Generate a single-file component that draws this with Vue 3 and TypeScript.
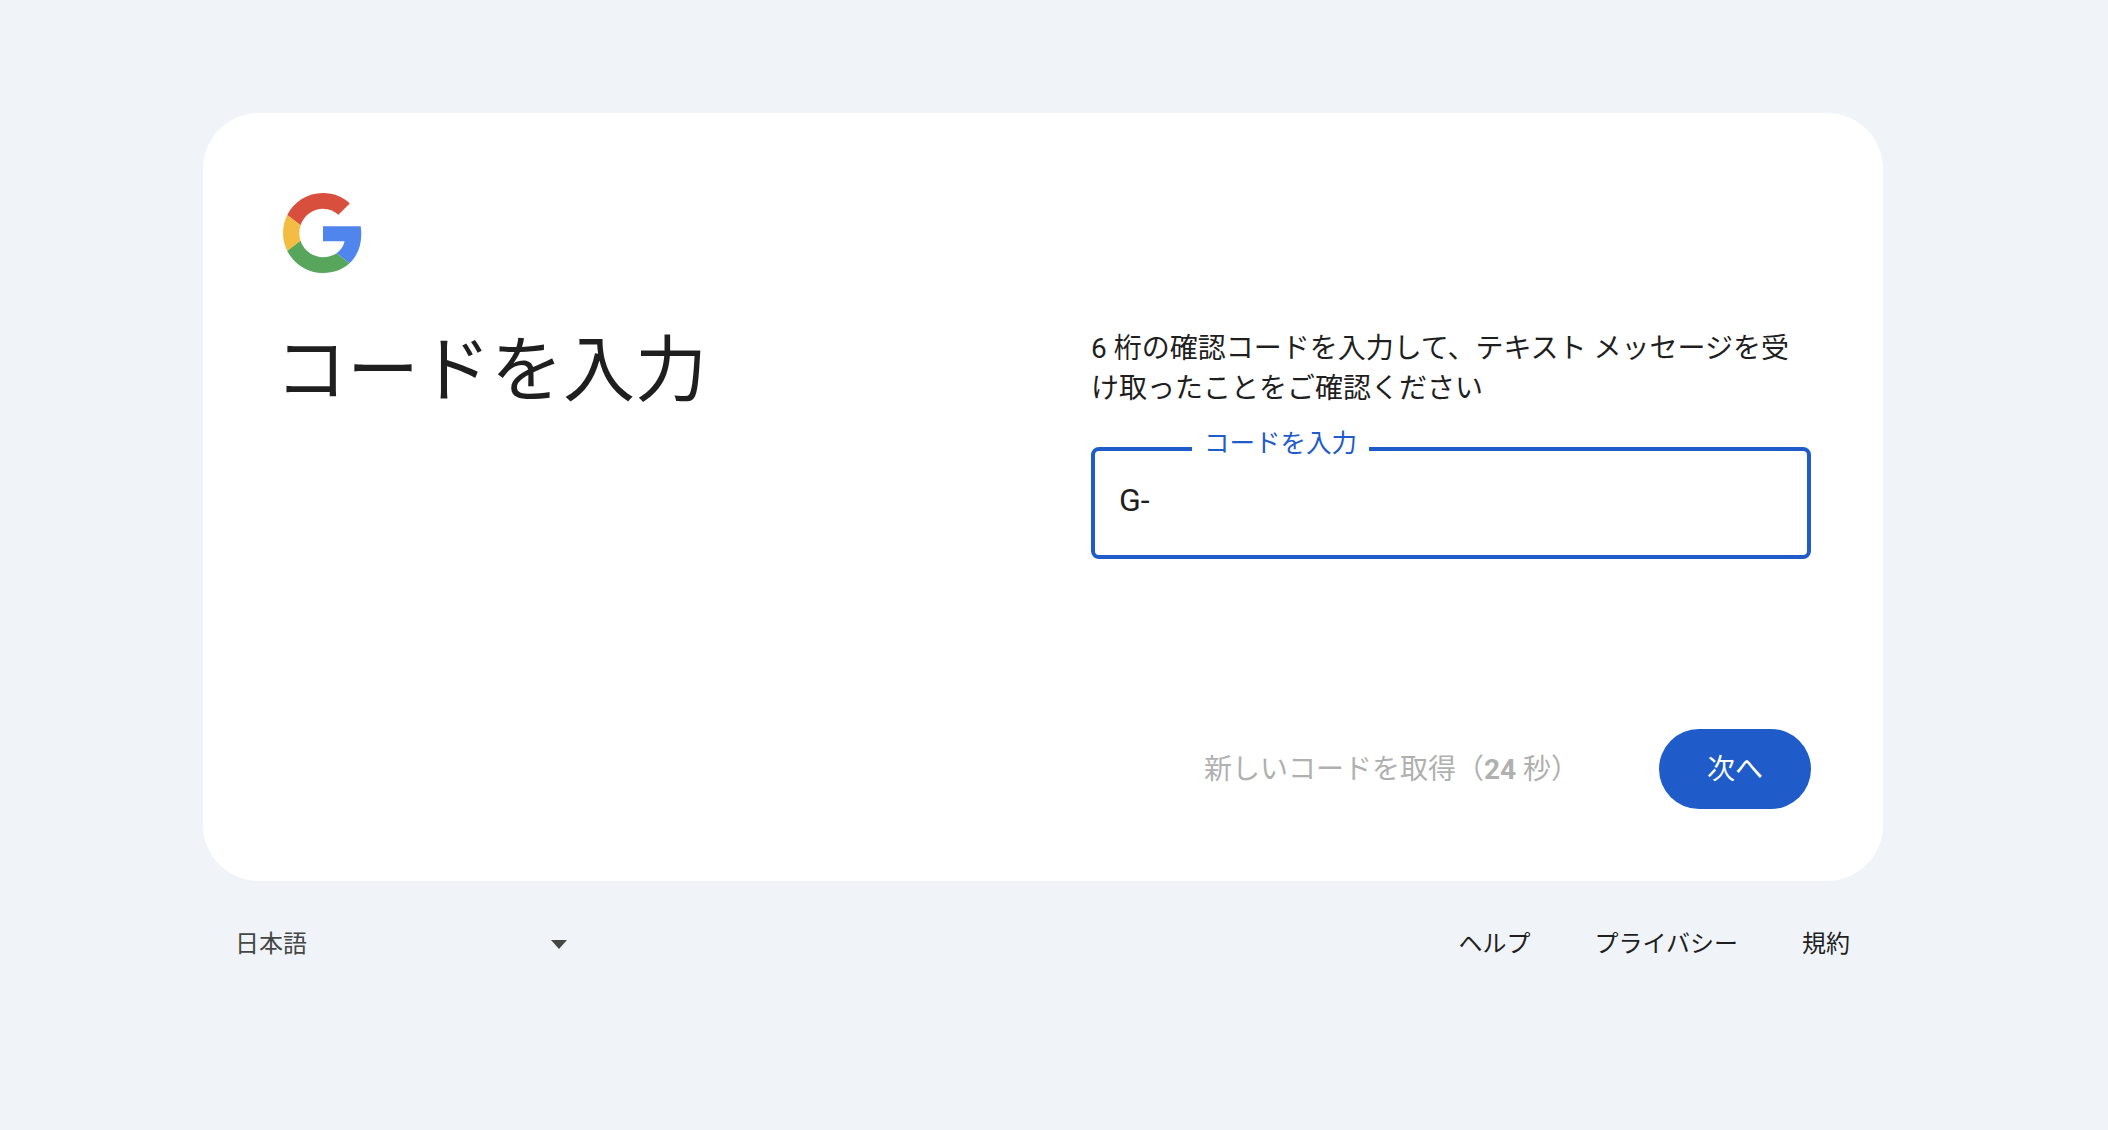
<script setup lang="ts">
const links: string[] = ['ヘルプ', 'プライバシー', '規約']
</script>

<template>
  <div class="page">
    <main class="card">
      <svg class="logo" viewBox="0 0 48 48" aria-label="Google">
        <path fill="#d94f3d" d="M24 9.5c3.54 0 6.71 1.22 9.21 3.6l6.85-6.85C35.9 2.38 30.47 0 24 0 14.62 0 6.51 5.38 2.56 13.22l7.98 6.19C12.43 13.72 17.74 9.5 24 9.5z" />
        <path fill="#5085ed" d="M46.98 24.55c0-1.57-.15-3.09-.38-4.55H24v9.02h12.94c-.58 2.96-2.26 5.48-4.78 7.18l7.73 6c4.51-4.18 7.09-10.36 7.09-17.65z" />
        <path fill="#f2bd42" d="M10.53 28.59c-.48-1.45-.76-2.99-.76-4.59s.27-3.14.76-4.59l-7.98-6.19C.92 16.46 0 20.12 0 24c0 3.88.92 7.54 2.56 10.78l7.97-6.19z" />
        <path fill="#58a65c" d="M24 48c6.48 0 11.93-2.13 15.89-5.81l-7.73-6c-2.15 1.45-4.92 2.3-8.16 2.3-6.26 0-11.57-4.22-13.47-9.91l-7.98 6.19C6.51 42.62 14.62 48 24 48z" />
      </svg>

      <div class="content">
        <h1 class="title">コードを入力</h1>
        <div class="form">
          <p class="desc">6 桁の確認コードを入力して、テキスト メッセージを受け取ったことをご確認ください</p>
          <div class="field">
            <span class="field-label">コードを入力</span>
            <input class="field-input" type="text" value="G-" readonly />
          </div>
          <div class="actions">
            <span class="resend">新しいコードを取得（<b>24</b> 秒）</span>
            <button class="next" type="button">次へ</button>
          </div>
        </div>
      </div>
    </main>

    <footer class="footer">
      <div class="lang">
        <span>日本語</span>
        <i class="caret"></i>
      </div>
      <nav class="links">
        <a v-for="link in links" :key="link" class="link">{{ link }}</a>
      </nav>
    </footer>
  </div>
</template>

<style>
html,
body {
  margin: 0;
  background: #f0f4f9;
}
</style>

<style scoped>
.page {
  box-sizing: border-box;
  min-height: 100vh;
  padding: 113px 0 0 203px;
  background: #f0f4f9;
  color: #1f1f1f;
  font-family: Roboto, "Noto Sans CJK JP", sans-serif;
}

.card {
  box-sizing: border-box;
  width: 1680px;
  height: 768px;
  padding: 80px 72px 72px 80px;
  background: #fff;
  border-radius: 56px;
}

.logo {
  display: block;
  width: 80px;
  height: 80px;
}

.content {
  display: flex;
  justify-content: space-between;
  margin-top: 56px;
}

.title {
  margin: -2px 0 0 -8px;
  font-size: 72px;
  font-weight: 400;
  line-height: 88px;
}

.form {
  width: 720px;
}

.desc {
  margin: 0;
  font-size: 28px;
  line-height: 40px;
}

.field {
  position: relative;
  margin-top: 38px;
}

.field-label {
  position: absolute;
  top: -20px;
  left: 101px;
  padding: 0 12px;
  background: #fff;
  color: #1f5bc9;
  font-size: 25.5px;
  line-height: 32px;
}

.field-input {
  display: block;
  box-sizing: border-box;
  width: 100%;
  height: 112px;
  padding: 0 24px 6px;
  border: 4px solid #1f5bc9;
  border-radius: 8px;
  outline: none;
  color: #1f1f1f;
  font-family: inherit;
  font-size: 32px;
}

.actions {
  display: flex;
  align-items: center;
  justify-content: flex-end;
  gap: 80px;
  margin-top: 170px;
}

.resend {
  padding-bottom: 5px;
  color: #b0b0b0;
  font-size: 28px;
}

.next {
  width: 152px;
  height: 80px;
  padding: 0 0 5px;
  border: 0;
  border-radius: 40px;
  background: #1f5bc9;
  color: #fff;
  font-family: inherit;
  font-size: 28px;
}

.footer {
  display: flex;
  align-items: center;
  justify-content: space-between;
  width: 1680px;
  padding-top: 46px;
  font-size: 24px;
  line-height: 34px;
}

.lang {
  display: flex;
  align-items: center;
  justify-content: space-between;
  width: 332px;
  margin-left: 32px;
  color: #444746;
}

.caret {
  width: 0;
  height: 0;
  border-top: 9px solid #444746;
  border-left: 8px solid transparent;
  border-right: 8px solid transparent;
}

.links {
  display: flex;
  gap: 64px;
  margin-right: 33px;
}
</style>
